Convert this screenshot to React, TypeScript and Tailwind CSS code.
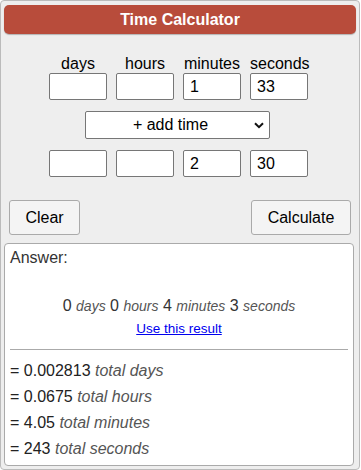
export default function App() {
  const first = ['', '', '1', '33'];
  const second = ['', '', '2', '30'];
  const labels = ['days', 'hours', 'minutes', 'seconds'];

  const inputRow = (vals: string[]) => (
    <div className="flex justify-center gap-[9px] pr-[3px]">
      {vals.map((v, i) => (
        <input
          key={i}
          defaultValue={v}
          className="h-[27px] w-[58px] rounded-[2px] border border-[#767676] bg-white px-[6px] text-[16px] text-black outline-none"
        />
      ))}
    </div>
  );

  return (
    <div
      className="flex h-[470px] w-[360px] flex-col rounded-[4px] border border-[#bbb] bg-[#eeeeee] px-[3px] pt-[4px]"
      style={{ fontFamily: '"Liberation Sans", Arial, sans-serif' }}
    >
      <div className="flex h-[29px] items-center justify-center rounded-[5px] bg-[#b84c3b] text-[16px] font-bold text-white shadow-[0_1px_1px_rgba(0,0,0,0.25)]">
        Time Calculator
      </div>

      <div className="mt-[21px] flex justify-center gap-[9px] pr-[3px] text-[16px] leading-[18px] text-black">
        {labels.map((l) => (
          <div key={l} className="w-[58px] text-center">
            {l}
          </div>
        ))}
      </div>
      {inputRow(first)}

      <div className="mt-[11px] flex justify-center pr-[5px]">
        <div className="relative h-[28px] w-[185px] rounded-[2px] border border-[#767676] bg-white">
          <div className="flex h-full items-center justify-center pr-[14px] text-[16px] text-black">
            + add time
          </div>
          <svg
            className="absolute right-[5px] top-[10px]"
            width="10"
            height="7"
            viewBox="0 0 10 7"
          >
            <path d="M1 1.2 L5 5.2 L9 1.2" fill="none" stroke="#111" strokeWidth="2" />
          </svg>
        </div>
      </div>

      <div className="mt-[11px]">{inputRow(second)}</div>

      <div className="mt-[23px] flex justify-between px-[5px]">
        <button className="h-[35px] w-[71px] rounded-[3px] border border-[#aaa] bg-[#f4f4f4] text-[16px] text-black">
          Clear
        </button>
        <button className="h-[35px] w-[100px] rounded-[3px] border border-[#aaa] bg-[#f4f4f4] text-[16px] text-black">
          Calculate
        </button>
      </div>

      <div className="mt-[8px] mr-[2px] flex h-[223px] flex-col rounded-[4px] border border-[#aaa] bg-white px-[5px] pt-[4px]">
        <div className="text-[16px] leading-[20px] text-[#333]">Answer:</div>

        <div className="mt-[28px] text-center text-[16px] leading-[20px] text-[#333]">
          0 <i className="text-[14px] text-[#555]">days</i> 0{' '}
          <i className="text-[14px] text-[#555]">hours</i> 4{' '}
          <i className="text-[14px] text-[#555]">minutes</i> 3{' '}
          <i className="text-[14px] text-[#555]">seconds</i>
        </div>
        <div className="mt-[5px] text-center text-[13.5px] leading-[16px]">
          <a href="#" className="text-[#0000ee] underline">
            Use this result
          </a>
        </div>

        <div className="mt-[12px] border-t border-[#aaa]" />

        <div className="mt-[11px] flex flex-col gap-[6px] text-[16px] leading-[20px] text-[#222]">
          <div>
            = 0.002813 <i className="text-[#555]">total days</i>
          </div>
          <div>
            = 0.0675 <i className="text-[#555]">total hours</i>
          </div>
          <div>
            = 4.05 <i className="text-[#555]">total minutes</i>
          </div>
          <div>
            = 243 <i className="text-[#555]">total seconds</i>
          </div>
        </div>
      </div>
    </div>
  );
}
